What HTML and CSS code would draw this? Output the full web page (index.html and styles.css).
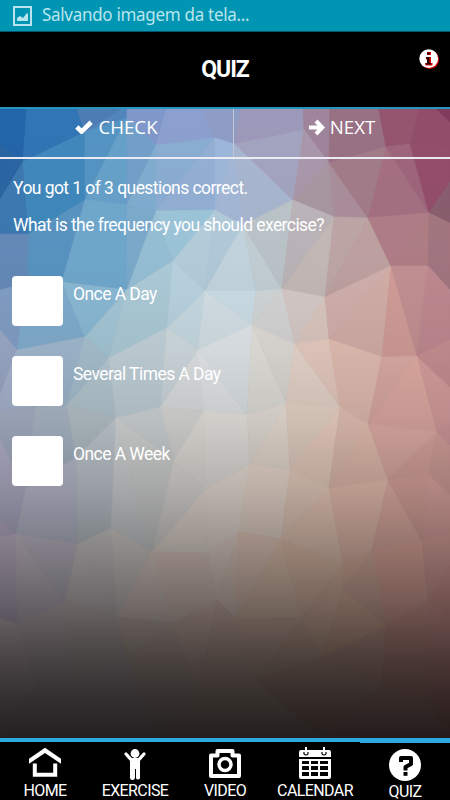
FILE: index.html
```html
<!DOCTYPE html>
<html lang="en">
<head>
<meta charset="utf-8">
<title>Quiz</title>
<link rel="stylesheet" href="styles.css">
</head>
<body>
<div class="app">
  <div class="status">
    <svg class="status-icon" viewBox="0 0 19 20"><path d="M1 1h17v18H1z" fill="none" stroke="#b8e5ed" stroke-width="2"/><path d="M4 15v-3l3-2 3 2 4-5 1 1v7z" fill="#b8e5ed"/></svg>
    <span class="status-text">Salvando imagem da tela...</span>
  </div>
  <header class="header">
    <h1 class="title">QUIZ</h1>
    <svg class="info" viewBox="0 0 22 22"><circle cx="11.7" cy="11.7" r="9.4" fill="#d50000"/><circle cx="10.7" cy="10.7" r="9.4" fill="#fff"/><path d="M9 4h4v3H9zM8 9h5v6h1.500v2.500H7.500V15H9v-3.500H8z" fill="#d50000"/><path d="M9 4.500h2.500v2H9zM8 9h3.500v6h1.500v1.500H7.500V15H9v-4.500H8z" fill="#300"/></svg>
  </header>
  <main class="content">
    <svg class="mesh" id="mesh" viewBox="0 108 450 631" preserveAspectRatio="none" aria-hidden="true"></svg>
    <div class="tabs">
      <div class="tab"><svg class="check" viewBox="0 0 17 13"><path d="M1.700 6.500l4.500 4.300L15.300 2" fill="none" stroke="#fff" stroke-width="4.400"/></svg><span>CHECK</span></div>
      <div class="tab next"><svg class="arrow" viewBox="0 0 16 16"><path d="M0 8h13M7 1.500L13.300 8 7 14.500" fill="none" stroke="#fff" stroke-width="4"/></svg><span>NEXT</span></div>
    </div>
    <div class="quiz">
      <p class="line score">You got 1 of 3 questions correct.</p>
      <p class="line question">What is the frequency you should exercise?</p>
      <div class="options">
        <div class="option"><i class="box"></i><span class="once-day">Once A Day</span></div>
        <div class="option"><i class="box"></i><span class="several">Several Times A Day</span></div>
        <div class="option"><i class="box"></i><span class="once-week">Once A Week</span></div>
      </div>
    </div>
  </main>
  <nav class="nav">
    <div class="item"><svg viewBox="0 0 34 34"><path d="M1 16.800v-5L17 .8l16 11v5L17 6z" fill="#fff"/><path d="M6.800 16.500v11.300h20.400V16.500" fill="none" stroke="#fff" stroke-width="4"/></svg><span>HOME</span></div>
    <div class="item"><svg viewBox="0 0 34 34"><circle cx="17" cy="6.500" r="4.400" fill="#fff"/><path d="M8 7l5.500 6h7L26 7" fill="none" stroke="#fff" stroke-width="3.300" stroke-linecap="round"/><path d="M12 11h10v19a2 2 0 0 1-4 1v-9h-1v9a2 2 0 0 1-5-1z" fill="#fff"/></svg><span>EXERCISE</span></div>
    <div class="item"><svg viewBox="0 0 34 34"><path d="M3 8.500h6.500V4h15v4.500H31v20.500H3z" fill="none" stroke="#fff" stroke-width="4" stroke-linejoin="round"/><circle cx="17" cy="17.500" r="6" fill="none" stroke="#fff" stroke-width="3.500"/></svg><span>VIDEO</span></div>
    <div class="item"><svg viewBox="0 0 34 34"><path d="M1 5a2 2 0 0 1 2-2h28a2 2 0 0 1 2 2v5H1zM1 12h32v18a2 2 0 0 1-2 2H3a2 2 0 0 1-2-2z" fill="#fff"/><path d="M8 0v7M26 0v7" stroke="#fff" stroke-width="2"/><path d="M6 5q-.5 3 2 3t2-3M24 5q-.5 3 2 3t2-3" fill="none" stroke="#000" stroke-width="1.200"/><path d="M4 14h7v3H4zM13 14h7v3h-7zM22 14h8v3h-8zM4 19h7v4H4zM13 19h7v4h-7zM22 19h8v4h-8zM4 25h7v4H4zM13 25h7v4h-7zM22 25h8v4h-8z" fill="#050505"/></svg><span>CALENDAR</span></div>
    <div class="item active"><svg viewBox="0 0 34 34"><circle cx="17" cy="17" r="16" fill="#fff"/><path d="M13 14v-4h10v6l-5.500 3v3.500" fill="none" stroke="#000" stroke-width="4" stroke-linejoin="round"/><path d="M15.500 24h4v3.800h-4z"/></svg><span>QUIZ</span></div>
  </nav>
</div>
<script src="mesh.js"></script>
</body>
</html>
```
FILE: styles.css
```css
* { box-sizing: border-box; }
body { margin: 0; background: #000; color: #fff; font-family: Roboto, "Liberation Sans", sans-serif; }
.app { width: 450px; height: 800px; display: flex; flex-direction: column; overflow: hidden; }
.status { height: 31px; flex: none; display: flex; align-items: center; padding-left: 13px; background: #0095b3; }
.status-icon { width: 19px; height: 20px; margin-right: 10px; }
.status-text { font: 18px/26px "Noto Sans", sans-serif; color: #b8e5ed; white-space: nowrap; letter-spacing: -.3px; transform: scaleX(.943); transform-origin: left; margin-top: -3px; }
.header { height: 76px; flex: none; display: grid; grid-template-columns: 1fr auto 1fr; background: #000; border-top: 1px solid #00566a; }
.title { grid-column: 2; margin: 0; font-size: 23px; line-height: 75px; font-weight: 700; letter-spacing: -1.1px; }
.info { justify-self: end; width: 22px; height: 22px; margin: 16px 10px 0 0; }
.content { position: relative; flex: 1; border-top: 2px solid #2796be; min-height: 0; }
.mesh { position: absolute; left: 0; top: -1px; width: 450px; height: 631px; z-index: -1; }
.tabs { display: grid; grid-template-columns: 233px 1fr; height: 50px; border-bottom: 2px solid #eceaf2; }
.tab { display: flex; justify-content: center; align-items: center; padding-bottom: 12px; font: 18.7px/24px "Open Sans", sans-serif; gap: 5px; }
.next { border-left: 1px solid #c7c5ce; }
.check { width: 18px; height: 14px; }
.arrow { width: 16px; height: 17px; }
.quiz { padding: 18px 12px; font-size: 17.5px; line-height: 22px; letter-spacing: -.56px; }
.line { margin: 0 0 15px 1px; }
.options { display: grid; gap: 30px; padding-top: 25px; }
.option { display: flex; gap: 10px; height: 50px; }
.option span { margin-top: 7px; }
.box { width: 51px; height: 50px; border-radius: 4px; background: #fff; }
.nav { height: 62px; flex: none; display: grid; grid-template-columns: repeat(5, 1fr); background: #000; }
.item { display: flex; flex-direction: column; align-items: center; border-top: 4px solid #2ca9df; padding-top: 5px; font-size: 16px; line-height: 18px; letter-spacing: -.6px; }
.item svg { width: 34px; height: 34px; }
.item span { margin-top: 1px; }
.active { border-top-width: 5px; }
```
FILE: mesh.js
```js
// Named mesh points, x and y in page pixels.
const P = {
  a0:[0,106],a1:[27,106],a2:[76,106],a3:[127,106],a4:[167,106],a5:[200,106],a6:[241,106],a7:[303,106],a8:[330,106],a9:[378,106],a10:[420,106],a11:[433,106],a12:[450,106],
  b0:[0,146],b1:[23,162],b2:[85,132],b3:[127,118],b4:[156,145],b5:[215,138],b6:[235,144],b7:[304,130],b8:[329,163],b9:[386,147],b10:[410,144],b11:[450,147],b12:[450,122],
  c0:[0,200],c1:[29,234],c2:[85,200],c3:[127,205],c4:[156,211],c5:[215,210],c6:[243,225],c7:[293,200],c8:[334,217],c9:[368,218],c10:[429,213],c11:[450,182],c12:[450,223],c13:[0,234],
  d0:[0,290],d1:[27,283],d2:[62,282],d3:[127,290],d4:[173,261],d5:[205,291],d6:[256,291],d7:[282,289],d8:[325,297],d9:[391,266],d10:[428,266],d11:[450,290],
  e0:[0,330],e1:[17,350],e2:[85,337],e3:[109,358],e4:[167,328],e5:[198,350],e6:[252,325],e7:[295,344],e8:[329,339],e9:[382,357],e10:[417,356],e11:[450,340],e12:[450,387],e13:[0,395],
  f0:[0,411],f1:[36,407],f2:[67,405],f3:[116,418],f4:[161,407],f5:[204,411],f6:[247,415],f7:[286,403],f8:[340,407],f9:[368,424],f10:[437,432],f11:[450,424],f12:[450,445],
  g0:[0,440],g1:[26,488],g2:[76,458],g3:[174,460],g4:[205,490],g5:[250,464],g6:[290,470],g7:[329,488],g8:[388,480],g9:[428,474],g10:[450,495],
  h0:[0,522],h1:[16,534],h2:[78,544],h3:[111,528],h4:[152,552],h5:[208,553],h6:[239,532],h7:[281,539],h8:[343,564],h9:[372,550],h10:[422,541],h11:[450,533],h12:[0,537],
  i0:[0,618],i1:[17,624],i2:[65,602],i3:[117,617],i4:[173,623],i5:[217,600],i6:[236,619],i7:[302,618],i8:[343,590],i9:[386,626],i10:[428,602],i11:[450,565],i12:[450,618],
  j0:[0,740],j1:[36,685],j2:[67,682],j3:[127,660],j4:[198,693],j5:[255,680],j6:[322,658],j7:[382,686],j8:[430,700],j9:[450,740],j10:[160,740],j11:[325,740]
};
// Each facet: its corners, then its colour as seen at its centre.
const F = `
a0 a1 b1 b0|2163a8
a1 a2 b2 b1|2f74b4
a2 a3 b2|4c79b2
a3 b3 b2|4f83ba
a3 a4 b4 b3|8196ca
a4 a5 b5 b4|8b9fce
a5 a6 b6 b5|8d9bc4
a6 a7 b7 b6|9c98b9
a7 a8 b8 b7|9e839c
a8 a9 b9 b8|987083
a9 a10 b10 b9|95546e
a10 a11 b12 b11 b10|904b69
a11 a12 b12|7d3a5b
b0 b1 c0|2964a0
b1 c1 c13 c0|3b78b0
b1 b2 c2 c1|3f87bb
b2 b3 c2|5293c2
b3 c3 c2|65a0c8
b3 b4 c3|719fc8
b4 c4 c3|7eabce
b4 b5 c4|8aadd1
b5 c5 c4|92add2
b5 b6 c5|9bb7d8
b6 c6 c5|a2b5d4
b6 c7 c6|a6b4cd
b6 b7 c7|a2a3c0
b7 b8 c7|a896a9
b8 c8 c7|a5959f
b8 c9 c8|a88d98
b8 b9 c9|a17a88
b9 c10 c9|a26e80
b9 b10 c10|9d647a
b10 b11 c11 c10|924b69
c11 c12 c10|865c6b
c13 c1 d1 d0|6487b5
c1 c2 d2 d1|5691be
c2 c3 d3 d2|6ca5ca
c3 c4 d3|78a7c9
c4 d4 d3|93bcd2
c4 c5 d4|9bc4d7
c5 d5 d4|b2ccd9
c5 c6 d5|afc8d8
c6 d6 d5|c1d2db
c6 d7 d6|becbd1
c6 c7 d7|b9c2c7
c7 c8 d7|b9b2b5
c8 d8 d7|c0b5b3
c8 c9 d8|bca5a4
c9 d9 d8|bc9f9f
c9 c10 d9|ad7c86
c10 d10 d9|ad7d83
c10 c12 d11 d10|a0747e
d0 d1 e1 e0|7c97bc
d1 d2 e2 e1|7ba6c7
d2 d3 e2|86b3ce
d3 e3 e2|9cbdcb
d3 d4 e4 e3|a6c4d0
d4 d5 e4|b3cdda
d5 e5 e4|bed0d8
d5 e6 e5|cbd7dd
d5 d6 e6|c5d8e1
d6 d7 e6|cad0d1
d7 e7 e6|cccccc
d7 d8 e7|cec3c0
d8 e8 e7|d1bfb5
d8 d9 e8|caaaa6
d9 e9 e8|caa7a0
d9 e10 e9|c8948f
d9 d10 e10|bd8c8e
d10 d11 e11 e10|b7838a
e0 e1 e13|929dba
e1 f1 f0 e13|9aa5bf
e1 e2 f2 f1|93abbf
e2 e3 f2|9db4c1
e3 f3 f2|a5b7bf
e3 e4 f4 f3|b2c1c8
e4 e5 f4|c3cdd0
e5 f5 f4|cbcecf
e5 f6 f5|d1d4d7
e5 e6 f6|d1d7dc
e6 f7 f6|d0cfca
e6 e7 f7|d0cdc8
e7 f8 f7|d5c4ba
e7 e8 f8|d9bfb4
e8 e9 f9 f8|d0aca1
e9 e10 f9|cb9e97
e10 f10 f9|ca9b93
e10 e12 f11 f10|c08d8e
e10 e11 e12|b78386
f0 f1 g1 g0|9097aa
f1 f2 g2 g1|929eab
f2 f3 g2|a0abaf
f3 f4 g3|b5babc
f4 f5 g3|c1c0bd
f5 g4 g3|c3c0bb
f5 f6 g5 g4|c7c6c2
f6 f7 g5|cbc6bf
f7 g6 g5|c9c0b7
f7 f8 g6|cdbbaf
f8 g7 g6|c8b1a3
f8 f9 g7|c4a69a
f9 g8 g7|bfa093
f9 f10 g8|c0958f
f10 g9 g8|b38780
f10 f12 g10 g9|ac827e
f11 f12 f10|b28285
g0 g1 h1 h0|88879b
g1 g2 h2 h1|8b8f9f
g2 f3 h3 h2|939ca3
f3 h4 h3|a0a4a5
f3 g3 h4|a9abaa
g3 g4 h4|aaa9a7
g4 h5 h4|a39d98
g4 g5 h6 h5|b2aba5
g5 g6 h7 h6|b7aca4
g6 g7 h7|b6a395
g7 h8 h7|a79588
g7 g8 h9 h8|ad9186
g8 h10 h9|a47f78
g8 g9 h10|a77e77
g9 g10 h11 h10|a57b78
h0 h1 h12|80758a
h12 h1 i1 i0|746b78
h1 i2 i1|706b72
h1 h2 i2|7b7881
h2 i3 i2|747271
h2 h3 i3|83807f
h3 h4 i3|858381
h4 i4 i3|797370
h4 h5 i5 i4|83756f
h5 h6 i5|958681
h6 i6 i5|8a7a74
h6 h7 i6|8d7b73
h7 i7 i6|7f7165
h7 h8 i7|887265
h8 i8 i7|7d695d
h8 h9 i8|886b5f
h9 h10 i10 i9|8a665f
h9 i9 i8|75635a
h10 h11 i11 i10|8b6662
i10 i11 i12|71504f
i0 i1 j1 j0|494246
i1 i2 j2 j1|504a4c
i2 i3 j3 j2|504b4a
i3 i4 j3|5a514c
i4 j4 j10 j3|3d3835
i4 i5 j4|5a4d49
i5 i6 j5 j4|514541
i6 i7 j5|594b46
i7 j6 j5|4e443d
i7 i8 j6|6c5c51
i8 i9 j6|685549
i9 j7 j6|4b3b38
i9 i10 j8 j7|4e3935
i10 i12 j9 j8|4a3433
j0 j1 j2 j3 j10|302d2d
j4 j5 j11 j10|2f2a28
j5 j6 j7 j11|362d2b
j7 j8 j9 j11|2d2423`;
const STOPS = [[106,0],[260,.02],[350,.07],[420,.14],[490,.26],[540,.38],[600,.53],[660,.7],[700,.79],[740,.86]];
function shade(y) {
  let k = 1;
  while (k < STOPS.length - 1 && y > STOPS[k][0]) k++;
  const [y0,v0] = STOPS[k - 1], [y1,v1] = STOPS[k];
  return v0 + (v1 - v0) * (y - y0) / (y1 - y0);
}
const facets = F.trim().split('\n').map(row => {
  const [names,hex] = row.split('|');
  const pts = names.split(' ').map(n => P[n]);
  const cx = pts.reduce((s,p) => s + p[0], 0) / pts.length;
  const cy = pts.reduce((s,p) => s + p[1], 0) / pts.length;
  const rgb = [0,2,4].map(n => parseInt(hex.substr(n,2),16) / (1 - shade(cy)));
  return {pts, cx, cy, rgb};
});
let out = '<defs><linearGradient id="fade" gradientUnits="userSpaceOnUse" x1="0" y1="106" x2="0" y2="740">';
for (const [y,v] of STOPS) out += `<stop offset="${(y - 106) / 634}" stop-color="#000" stop-opacity="${v}"/>`;
out += '</linearGradient></defs><rect y="106" width="450" height="640" fill="#ad9c95"/>';
for (const f of facets) {
  // Facets lose contrast with their neighbours towards the foot of the page.
  const near = facets.filter(g => Math.hypot(g.cx - f.cx, g.cy - f.cy) < 85);
  const t = Math.max(.1, Math.min(.65, (f.cy - 250) / 480));
  const rgb = f.rgb.map((v,n) => {
    const mean = near.reduce((s,g) => s + g.rgb[n], 0) / near.length;
    return Math.max(0, Math.min(255, Math.round(v * (1 - t) + mean * t)));
  });
  const c = `rgb(${rgb})`;
  out += `<polygon points="${f.pts.join(' ')}" fill="${c}" stroke="${c}" stroke-width=".6"/>`;
}
document.getElementById('mesh').innerHTML = out + '<rect y="106" width="450" height="640" fill="url(#fade)"/>';
```
